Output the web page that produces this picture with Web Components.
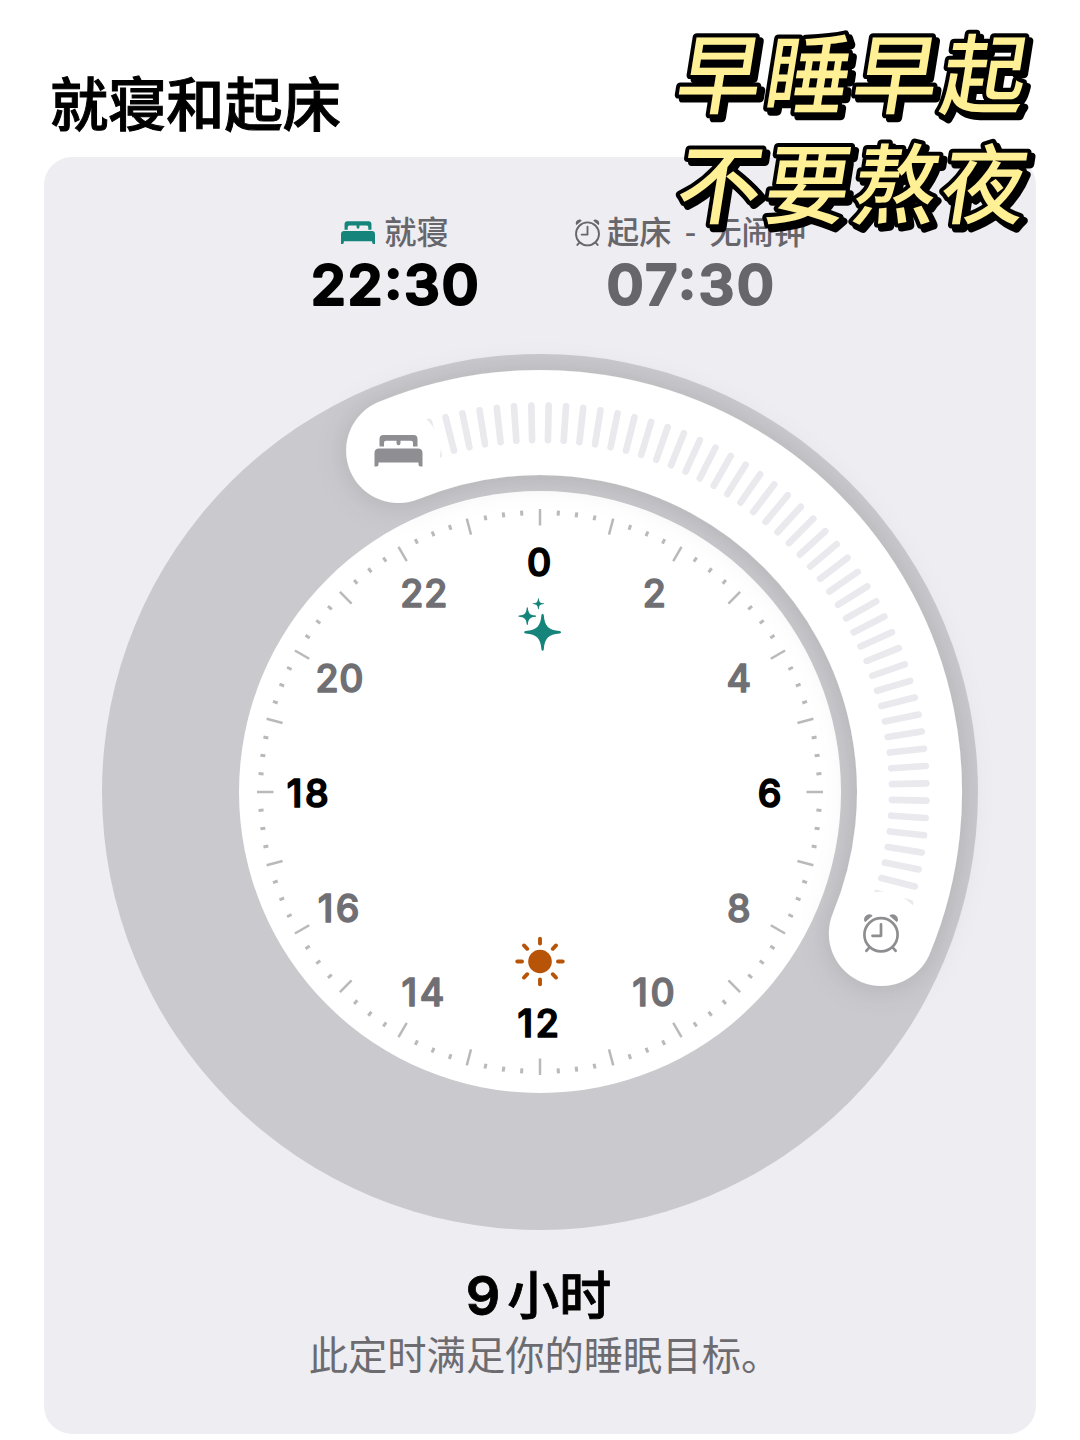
<!DOCTYPE html>
<html lang="zh-CN">
<head>
<meta charset="utf-8">
<title>就寝和起床</title>
<style>
html,body{margin:0;padding:0;background:#fff}
body{font-family:Inter,"Noto Sans CJK SC",sans-serif}
</style>
</head>
<body>
<sleep-page></sleep-page>
<script>
const define = (name, html, setup) => customElements.define(name, class extends HTMLElement {
  constructor() {
    super();
    this.attachShadow({mode: 'open'}).innerHTML = html;
    if (setup) setup(this.shadowRoot, this);
  }
});

const bedShapes = `
  <path d="M5 12V4.6Q5 .5 9 .5H39Q43 .5 43 4.6V12H38.500V8.300Q38.500 6.200 36.500 6.200H26V8.500Q26 10.700 24 10.700T22 8.500V6.200H11.500Q9.500 6.200 9.500 8.300V12Z"/>
  <path d="M0 32V18.500Q0 14 4.500 14H43.500Q48 14 48 18.500V32H46Q44 32 44 30V28H4V30Q4 32 2 32Z"/>`;
const clockShapes = `
  <g fill="none" stroke="currentColor" stroke-width="2.700" stroke-linecap="round" stroke-linejoin="round">
    <circle cx="18" cy="21.500" r="16.600"/>
    <path d="M18 11V22.500H9.500M6 34.500L3.300 37.500M30 34.500L32.700 37.500"/>
  </g>
  <path fill="currentColor" d="M2.300 8.800Q1 8.500 1 6.500Q1.300 1.500 6.500 .9Q9 .9 9.600 2.400ZM33.700 8.800Q35 8.500 35 6.500Q34.700 1.500 29.500 .9Q27 .9 26.400 2.400Z"/>`;
const starShape = `M0 -18.500Q1 -18.500 1.200 -17C2 -6 6 -2 17 -1.200Q18.500 -1 18.500 0T17 1.200C6 2 2 6 1.200 17Q1 18.500 0 18.500T-1.200 17C-2 6 -6 2 -17 1.200Q-18.500 1 -18.500 0T-17 -1.200C-6 -2 -2 -6 -1.200 -17Q-1 -18.500 0 -18.500Z`;

define('bed-icon', `<style>:host{display:block}svg{display:block;width:100%;height:100%}</style><svg viewBox="0 0 48 32" preserveAspectRatio="none" fill="currentColor">${bedShapes}</svg>`);

define('alarm-icon', `<style>:host{display:block}svg{display:block;width:100%;height:100%;overflow:visible}</style><svg viewBox="0 0 36 39">${clockShapes}</svg>`);

define('time-block', `<style>
  :host{display:flex;flex-direction:column;align-items:center;color:#66666b}
  .label{display:flex;align-items:center;height:46px;font:500 32.200px/46px "Noto Sans CJK SC",sans-serif;white-space:nowrap;word-spacing:6px}
  ::slotted(span){position:relative;top:-2px}
  svg{display:block;margin-top:1px;overflow:visible}
  text{font:600 56.500px Inter,sans-serif;text-anchor:middle;fill:var(--time,#66666b);stroke:var(--time,#66666b);
    stroke-width:2.200;stroke-linejoin:round;letter-spacing:var(--track,1.900px);font-feature-settings:"case" 1}
</style><div class="label"><slot name="icon"></slot><slot name="label"></slot></div>
<svg width="166" height="60"><text x="83.500" y="49.300"></text></svg>`, (root, host) => {
  root.querySelector('text').textContent = host.getAttribute('time');
});

define('sticker-text', `<style>
  :host{display:block;filter:drop-shadow(4.500px 4px 0 #000)}
  svg{display:block;overflow:visible}
  text{font:500 84.500px "Noto Sans CJK SC",sans-serif;fill:#fff096;letter-spacing:3.700px;
    stroke:#000;stroke-width:8px;paint-order:stroke fill;stroke-linejoin:round}
</style>
<svg width="370" height="220">
  <text transform="translate(3 86.500) skewX(-9) scale(1 1.030)">早睡早起</text>
  <text transform="translate(3 196.500) skewX(-9) scale(1 1.030)">不要熬夜</text>
</svg>`);

define('sleep-dial', `<style>
  :host{display:block;width:876px;height:876px}
  svg{display:block;overflow:visible}
  text{font:500 37.500px Inter,sans-serif;text-anchor:middle;fill:#707074;stroke:#707074;stroke-width:1.400;
    stroke-linejoin:round;letter-spacing:.8px}
  text.main{fill:#000;stroke:#000;stroke-width:1.700}
  text.teen{letter-spacing:2.600px}
</style>
<svg width="876" height="876" viewBox="-438 -438 876 876">
  <defs>
    <filter id="lift" x="-20%" y="-20%" width="140%" height="140%">
      <feDropShadow dx="0" dy="2" stdDeviation="15" flood-color="#000" flood-opacity=".13"/>
    </filter>
    <mask id="fade" maskUnits="userSpaceOnUse" x="-438" y="-438" width="876" height="876">
      <rect x="-438" y="-438" width="876" height="876" fill="#fff"/>
      <circle cx="-141.400" cy="-341.400" r="42"/><circle cx="341.400" cy="141.400" r="42"/>
    </mask>
  </defs>
  <circle r="438" fill="#cacace"/>
  <circle r="301" fill="#fff"/>
  <path d="M-141.400 -341.400A369.500 369.500 0 0 1 341.400 141.400" fill="none" stroke="#fff" stroke-width="105" stroke-linecap="round" filter="url(#lift)"/>
  <g id="grip" stroke="#e9e9ee" stroke-width="6.600" stroke-linecap="round" mask="url(#fade)"></g>
  <g id="ticks" stroke="#b9b9bb"></g>
  <g id="hours"></g>
  <g fill="#8e8e93" transform="translate(-165.500 -357.500)">${bedShapes}</g>
  <g color="#8e8e91" transform="translate(323 121.300)">${clockShapes}</g>
  <g fill="#15847b">
    <path d="${starShape}" transform="translate(2.600 -159.800)"/>
    <path d="${starShape}" transform="translate(-12.700 -175.800) scale(.48)"/>
    <path d="${starShape}" transform="translate(-1.600 -188.300) scale(.31)"/>
  </g>
  <g transform="translate(0 169.500)"><circle r="11.800" fill="#b85408"/><g id="rays" stroke="#b85408" stroke-width="3.900" stroke-linecap="round"></g></g>
</svg>`, root => {
  const NS = 'http://www.w3.org/2000/svg';
  const ray = (parent, from, to, deg, width) => {
    const line = document.createElementNS(NS, 'line');
    line.setAttribute('y1', -from);
    line.setAttribute('y2', -to);
    line.setAttribute('transform', `rotate(${deg})`);
    if (width) line.setAttribute('stroke-width', width);
    root.getElementById(parent).append(line);
  };
  for (let i = -7; i <= 41; i++) ray('grip', 352, 386.5, (i + .5) * 90 / 35);
  for (let i = 0; i < 96; i++) ray('ticks', i % 4 ? 277 : 266.5, i % 4 ? 282 : 283, i * 3.75, i % 4 ? 3 : 2.5);
  for (let i = 0; i < 8; i++) ray('rays', 18, 22.7, i * 45);
  for (let h = 0; h < 24; h += 2) {
    const a = h * Math.PI / 12, t = document.createElementNS(NS, 'text');
    t.textContent = h;
    t.setAttribute('x', Math.sin(a) * 230.5 - .5);
    t.setAttribute('y', -Math.cos(a) * 230.5 + 14.8);
    t.classList.toggle('main', h % 6 === 0);
    t.classList.toggle('teen', h > 9 && h < 20);
    root.getElementById('hours').append(t);
  }
});

define('sleep-card', `<style>
  :host{display:flex;flex-direction:column;align-items:center;box-sizing:border-box;width:992px;height:1277px;
    margin-left:44px;padding-top:52px;border-radius:28px;background:#eeedf2}
  .times{display:flex;align-self:stretch;padding-left:268px;gap:97px}
  time-block.bed{--time:#000;--track:1.600px;width:166px}
  time-block.wake{--track:2.400px;width:231px}
  bed-icon{width:34px;height:23px;color:#15847b;margin-right:9px}
  alarm-icon{width:25px;height:27px;margin-right:7px}
  sleep-dial{margin-top:38px}
  .total{display:flex;align-items:baseline;gap:7px;margin:25px 3px 0 0;font:500 52px/76px "Noto Sans CJK SC",sans-serif;
    -webkit-text-stroke:.8px #000;color:#000}
  .total b{font:600 54px/76px Inter,sans-serif}
  .note{font:400 39.300px/56px "Noto Sans CJK SC",sans-serif;color:#6b6b70;margin-left:9px;margin-top:-9px;white-space:nowrap}
</style>
<div class="times">
  <time-block class="bed" time="22:30"><bed-icon slot="icon"></bed-icon><span slot="label">就寝</span></time-block>
  <time-block class="wake" time="07:30"><alarm-icon slot="icon"></alarm-icon><span slot="label">起床 - 无闹钟</span></time-block>
</div>
<sleep-dial></sleep-dial>
<div class="total"><b>9</b><span>小时</span></div>
<div class="note">此定时满足你的睡眠目标。</div>`);

define('sleep-page', `<style>
  :host{display:block;position:relative;width:1080px;height:1440px;overflow:hidden;background:#fff}
  header{height:157px;box-sizing:border-box;padding:59px 0 0 50px}
  h1{margin:0;font:500 58.200px/84px "Noto Sans CJK SC",sans-serif;color:#000;-webkit-text-stroke:1px #000}
  .sticker{position:absolute;left:670px;top:20px}
</style>
<header><h1>就寝和起床</h1></header>
<sleep-card></sleep-card>
<div class="sticker"><sticker-text></sticker-text></div>`);
</script>
</body>
</html>
